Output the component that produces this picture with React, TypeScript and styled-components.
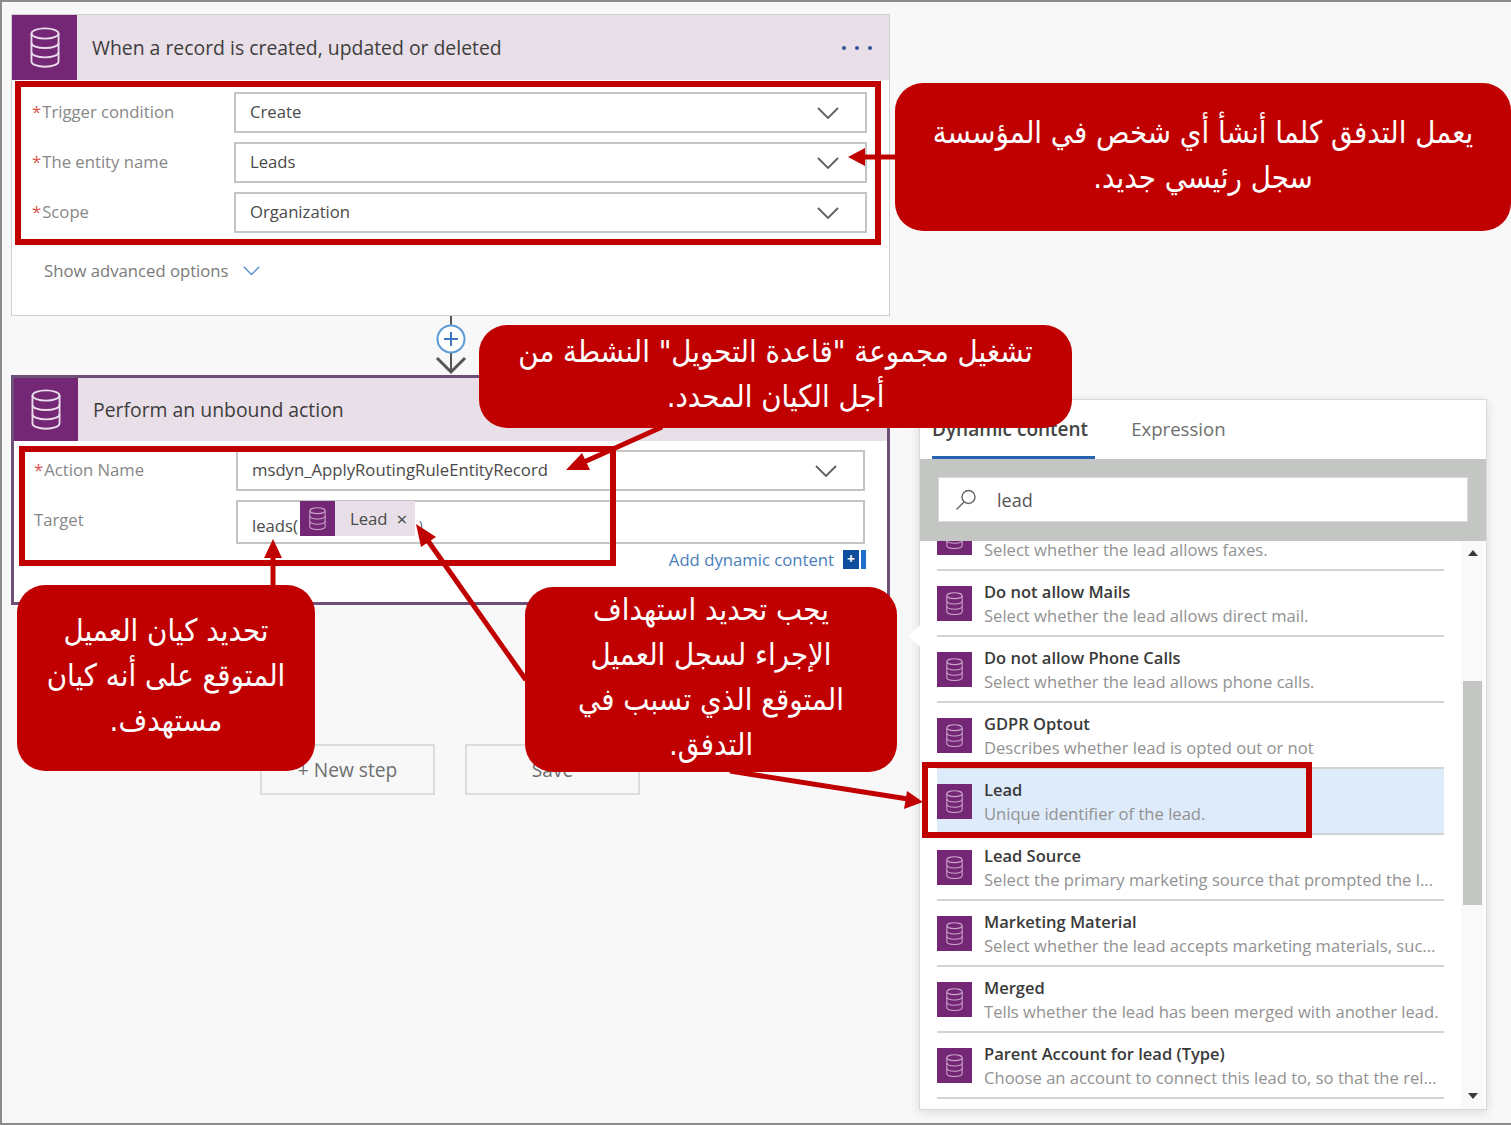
import styled, { createGlobalStyle } from 'styled-components'

const RED = '#c00000'
const PURPLE = '#742774'

const GlobalStyle = createGlobalStyle`
  html, body {
    margin: 0;
    padding: 0;
    background: #f7f8f7;
  }
  * {
    box-sizing: border-box;
  }
`

const Page = styled.div`
  position: relative;
  display: flex;
  align-items: flex-start;
  width: 1511px;
  height: 1125px;
  overflow: hidden;
  padding: 12px 0 0 9px;
  background: #f7f8f7;
  border: solid #8b8b8b;
  border-width: 2px 0 2px 2px;
  font-family: 'Open Sans', 'Noto Sans', sans-serif;
`

const LeftColumn = styled.div`
  display: flex;
  flex-direction: column;
  width: 879px;
  flex-shrink: 0;
`

const Card = styled.div<{ $strong?: boolean }>`
  background: #fff;
  border: ${({ $strong }) => ($strong ? '3px solid #6d5078' : '1px solid #cfcfcf')};
  height: ${({ $strong }) => ($strong ? '230px' : '302px')};
`

const CardHeader = styled.div<{ $height: number }>`
  display: flex;
  align-items: center;
  height: ${({ $height }) => $height}px;
  background: #e8dfe8;
`

const HeaderIcon = styled.div<{ $width: number }>`
  display: flex;
  align-items: center;
  justify-content: center;
  width: ${({ $width }) => $width}px;
  height: 100%;
  background: ${PURPLE};
  flex-shrink: 0;
`

const CardTitle = styled.div`
  flex: 1;
  margin-left: 15px;
  font-size: 19.4px;
  color: #3f3d3c;
`

const Dots = styled.div`
  display: flex;
  gap: 9px;
  margin-right: 17px;
  span {
    width: 4px;
    height: 4px;
    border-radius: 50%;
    background: #2b5797;
  }
`

const Form = styled.div<{ $top: number }>`
  display: flex;
  flex-direction: column;
  gap: 9px;
  padding: ${({ $top }) => $top}px 22px 0 20px;
`

const FormRow = styled.div`
  display: grid;
  grid-template-columns: 202px 1fr;
  align-items: start;
`

const Label = styled.div`
  font-size: 16.7px;
  line-height: 40px;
  color: #878787;
  white-space: nowrap;
  em {
    font-style: normal;
    color: #d9534f;
    margin-right: 1px;
  }
`

const Select = styled.div<{ $height?: number }>`
  position: relative;
  display: flex;
  align-items: center;
  height: ${({ $height }) => $height ?? 41}px;
  padding: 0 14px 2px;
  background: #fff;
  border: 2px solid #c4c4c4;
  font-size: 16.7px;
  color: #4a4a4a;
  white-space: nowrap;
  > svg {
    position: absolute;
    right: 26px;
    top: 50%;
    transform: translateY(-50%);
  }
`

const AdvancedRow = styled.div`
  display: flex;
  align-items: center;
  gap: 14px;
  margin: 26px 0 0 32px;
  font-size: 16.7px;
  color: #7a7a7a;
`

const Connector = styled.div`
  display: flex;
  justify-content: center;
  height: 60px;
  margin-left: 1px;
  margin-bottom: -1px;
`

const TargetValue = styled.div`
  display: flex;
  align-items: flex-start;
  height: 100%;
`

const TargetText = styled.span`
  align-self: center;
  margin: 8px 2px 0 0;
`

const TargetClose = styled(TargetText)`
  margin-left: 4px;
  font-size: 12px;
`

const Chip = styled.div`
  display: flex;
  align-items: center;
  width: 115px;
  height: 35px;
  margin-top: -1px;
  background: #e8dfe8;
  font-size: 16.7px;
  color: #4a4a4a;
`

const ChipIcon = styled.div`
  display: flex;
  align-items: center;
  justify-content: center;
  width: 35px;
  height: 100%;
  background: ${PURPLE};
  margin-right: 15px;
`

const ChipClose = styled.span`
  margin-left: 9px;
  font-size: 19px;
`

const AddDynamic = styled.div`
  display: flex;
  align-items: center;
  justify-content: flex-end;
  gap: 9px;
  margin: 4px 21px 0 0;
  font-size: 16.7px;
  color: #4a7ebb;
`

const PlusBox = styled.div`
  display: flex;
  justify-content: center;
  width: 23px;
  height: 19px;
  padding-right: 7px;
  font-size: 14px;
  font-weight: 700;
  line-height: 18px;
  color: #fff;
  background: linear-gradient(to right, #0f4c9c 16px, #fff 16px, #fff 18px, #1f6fd0 18px);
`

const ButtonRow = styled.div`
  display: flex;
  gap: 30px;
  margin: 139px 0 0 249px;
`

const FlowButton = styled.div`
  display: flex;
  align-items: center;
  justify-content: center;
  width: 175px;
  height: 51px;
  border: 2px solid #dcdedc;
  font-size: 19.2px;
  color: #6f6f6f;
`

const Panel = styled.div`
  position: relative;
  display: flex;
  flex-direction: column;
  width: 568px;
  height: 711px;
  margin: 385px 0 0 29px;
  background: #fff;
  border: 1px solid #d8d8d8;
  box-shadow: 0 2px 10px rgba(0, 0, 0, 0.12);
  flex-shrink: 0;
  &::before {
    content: '';
    position: absolute;
    left: -11px;
    top: 225px;
    border: solid transparent;
    border-width: 11px 11px 11px 0;
    border-right-color: #fff;
  }
`

const Tabs = styled.div`
  display: flex;
  gap: 36px;
  height: 59px;
  padding-left: 12px;
`

const Tab = styled.div<{ $active?: boolean }>`
  padding: 16px 7px 0 0;
  height: 59px;
  font-size: ${({ $active }) => ($active ? 19 : 18.6)}px;
  font-weight: ${({ $active }) => ($active ? 600 : 400)};
  color: ${({ $active }) => ($active ? '#444' : '#6f6f6f')};
  border-bottom: 3px solid ${({ $active }) => ($active ? '#2b62b0' : 'transparent')};
`

const SearchBand = styled.div`
  padding: 18px;
  height: 82px;
  background: #c4c6c4;
`

const SearchBox = styled.div`
  display: flex;
  align-items: center;
  gap: 20px;
  height: 45px;
  padding-left: 16px;
  background: #fff;
  border: 1px solid #d9d9d9;
  font-size: 18px;
  color: #555;
`

const ListArea = styled.div`
  display: flex;
  flex: 1;
  min-height: 0;
`

const List = styled.div`
  flex: 1;
  overflow: hidden;
  padding-left: 17px;
`

const ListInner = styled.div`
  margin-top: -36px;
  width: 507px;
`

const Item = styled.div<{ $selected?: boolean }>`
  display: flex;
  align-items: flex-start;
  gap: 12px;
  height: 66px;
  padding-top: 15px;
  background: ${({ $selected }) => ($selected ? '#deebfa' : 'transparent')};
  border-bottom: 2px solid #d2d4d2;
`

const ItemIcon = styled.div`
  display: flex;
  align-items: center;
  justify-content: center;
  width: 35px;
  height: 35px;
  background: ${PURPLE};
  flex-shrink: 0;
`

const ItemText = styled.div`
  margin-top: -6px;
  min-width: 0;
  white-space: nowrap;
`

const ItemTitle = styled.div`
  margin-bottom: 2px;
  font-size: 16.5px;
  font-weight: 600;
  line-height: 24px;
  color: #3a3a3a;
`

const ItemDesc = styled.div`
  font-size: 16.6px;
  line-height: 20px;
  color: #929292;
`

const Scrollbar = styled.div`
  display: flex;
  flex-direction: column;
  align-items: center;
  width: 23px;
  margin-right: 2px;
  padding-top: 9px;
  background: #f8f9f8;
`

const ScrollUp = styled.div`
  width: 0;
  height: 0;
  border: solid transparent;
  border-width: 0 5px 6px;
  border-bottom-color: #3a3a3a;
`

const ScrollThumb = styled.div`
  width: 19px;
  height: 224px;
  margin-top: 125px;
  background: #c4c6c4;
`

const ScrollDown = styled.div`
  width: 0;
  height: 0;
  margin-top: auto;
  margin-bottom: 10px;
  border: solid transparent;
  border-width: 6px 5px 0;
  border-top-color: #3a3a3a;
`

const Highlight = styled.div<{ $x: number; $y: number; $w: number; $h: number }>`
  position: absolute;
  left: ${({ $x }) => $x - 2}px;
  top: ${({ $y }) => $y - 2}px;
  width: ${({ $w }) => $w}px;
  height: ${({ $h }) => $h}px;
  border: 6px solid ${RED};
  pointer-events: none;
`

const Callout = styled.div<{ $x: number; $y: number; $w: number; $h: number }>`
  position: absolute;
  left: ${({ $x }) => $x - 2}px;
  top: ${({ $y }) => $y - 2}px;
  width: ${({ $w }) => $w}px;
  height: ${({ $h }) => $h}px;
  display: flex;
  flex-direction: column;
  justify-content: center;
  padding: 0 14px 5px;
  border-radius: 28px;
  background: ${RED};
  color: #fff;
  direction: rtl;
  text-align: center;
  font-family: 'DejaVu Sans Condensed', 'DejaVu Sans', sans-serif;
  font-stretch: condensed;
  font-size: 30.8px;
  line-height: 45px;
`

const ArrowLayer = styled.svg`
  position: absolute;
  left: -2px;
  top: -2px;
  pointer-events: none;
`

const DbIcon = ({ size, color }: { size: number; color: string }) => (
  <svg width={size} height={size * 1.37} viewBox="0 0 32 44" fill="none" stroke={color} strokeWidth="2">
    <ellipse cx="16" cy="7" rx="14.5" ry="5.5" />
    <path d="M1.5 7v30c0 3.200 6.500 5.500 14.500 5.500s14.500-2.300 14.500-5.500V7" />
    <path d="M1.500 17c0 3.200 6.500 5.500 14.500 5.500s14.500-2.300 14.500-5.500" />
    <path d="M1.500 27c0 3.200 6.500 5.500 14.500 5.500s14.500-2.300 14.500-5.500" />
  </svg>
)

const Chevron = ({ color = '#5f5f5f', width = 22 }: { color?: string; width?: number }) => (
  <svg width={width} height={width * 0.55} viewBox="0 0 22 12" fill="none" stroke={color} strokeWidth="1.8">
    <path d="M1 1l10 10L21 1" />
  </svg>
)

const items = [
  { title: '', desc: 'Select whether the lead allows faxes.' },
  { title: 'Do not allow Mails', desc: 'Select whether the lead allows direct mail.' },
  { title: 'Do not allow Phone Calls', desc: 'Select whether the lead allows phone calls.' },
  { title: 'GDPR Optout', desc: 'Describes whether lead is opted out or not' },
  { title: 'Lead', desc: 'Unique identifier of the lead.', selected: true },
  { title: 'Lead Source', desc: 'Select the primary marketing source that prompted the l...' },
  { title: 'Marketing Material', desc: 'Select whether the lead accepts marketing materials, suc...' },
  { title: 'Merged', desc: 'Tells whether the lead has been merged with another lead.' },
  { title: 'Parent Account for lead (Type)', desc: 'Choose an account to connect this lead to, so that the rel...' },
]

const triggerRows = [
  { label: 'Trigger condition', value: 'Create' },
  { label: 'The entity name', value: 'Leads' },
  { label: 'Scope', value: 'Organization' },
]

export default function App() {
  return (
    <Page>
      <GlobalStyle />
      <LeftColumn>
        <Card>
          <CardHeader $height={65}>
            <HeaderIcon $width={65}>
              <DbIcon size={30} color="#eadcea" />
            </HeaderIcon>
            <CardTitle>When a record is created, updated or deleted</CardTitle>
            <Dots>
              <span />
              <span />
              <span />
            </Dots>
          </CardHeader>
          <Form $top={12}>
            {triggerRows.map((row) => (
              <FormRow key={row.label}>
                <Label>
                  <em>*</em>
                  {row.label}
                </Label>
                <Select>
                  {row.value}
                  <Chevron />
                </Select>
              </FormRow>
            ))}
          </Form>
          <AdvancedRow>
            Show advanced options
            <Chevron color="#5b8fd0" width={17} />
          </AdvancedRow>
        </Card>

        <Connector>
          <svg width="32" height="60" viewBox="0 0 32 60" fill="none">
            <path d="M16 0v10M16 36v20" stroke="#555" strokeWidth="2" />
            <circle cx="16" cy="23" r="13.500" fill="#fff" stroke="#5b9bd5" strokeWidth="2" />
            <path d="M16 16v14M9 23h14" stroke="#3a78c2" strokeWidth="2" />
            <path d="M2 42l14 14 14-14" stroke="#555" strokeWidth="3" />
          </svg>
        </Connector>

        <Card $strong>
          <CardHeader $height={63}>
            <HeaderIcon $width={64}>
              <DbIcon size={30} color="#eadcea" />
            </HeaderIcon>
            <CardTitle>Perform an unbound action</CardTitle>
          </CardHeader>
          <Form $top={9}>
            <FormRow>
              <Label>
                <em>*</em>
                Action Name
              </Label>
              <Select>
                msdyn_ApplyRoutingRuleEntityRecord
                <Chevron />
              </Select>
            </FormRow>
            <FormRow>
              <Label>Target</Label>
              <Select $height={44}>
                <TargetValue>
                  <TargetText>leads(</TargetText>
                  <Chip>
                    <ChipIcon>
                      <DbIcon size={17} color="#c9a2c9" />
                    </ChipIcon>
                    Lead
                    <ChipClose>×</ChipClose>
                  </Chip>
                  <TargetClose>)</TargetClose>
                </TargetValue>
              </Select>
            </FormRow>
          </Form>
          <AddDynamic>
            Add dynamic content
            <PlusBox>+</PlusBox>
          </AddDynamic>
        </Card>

        <ButtonRow>
          <FlowButton>+ New step</FlowButton>
          <FlowButton>Save</FlowButton>
        </ButtonRow>
      </LeftColumn>

      <Panel>
        <Tabs>
          <Tab $active>Dynamic content</Tab>
          <Tab>Expression</Tab>
        </Tabs>
        <SearchBand>
          <SearchBox>
            <svg width="22" height="22" viewBox="0 0 22 22" fill="none" stroke="#666" strokeWidth="1.400">
              <circle cx="13.500" cy="8" r="6.500" />
              <path d="M9 13L1.500 20.500" />
            </svg>
            lead
          </SearchBox>
        </SearchBand>
        <ListArea>
          <List>
            <ListInner>
              {items.map((item) => (
                <Item key={item.desc} $selected={item.selected}>
                  <ItemIcon>
                    <DbIcon size={17} color="#c9a2c9" />
                  </ItemIcon>
                  <ItemText>
                    <ItemTitle>{item.title || '\u00a0'}</ItemTitle>
                    <ItemDesc>{item.desc}</ItemDesc>
                  </ItemText>
                </Item>
              ))}
            </ListInner>
          </List>
          <Scrollbar>
            <ScrollUp />
            <ScrollThumb />
            <ScrollDown />
          </Scrollbar>
        </ListArea>
      </Panel>

      <Highlight $x={15} $y={81} $w={866} $h={164} />
      <Highlight $x={19} $y={446} $w={597} $h={120} />
      <Highlight $x={922} $y={762} $w={390} $h={76} />

      <ArrowLayer width={1511} height={1125} viewBox="0 0 1511 1125" fill="none">
        <path d="M896 157H860" stroke={RED} strokeWidth="5" />
        <path d="M848 157l17-9v18z" fill={RED} />
        <path d="M662 427L584 462" stroke={RED} strokeWidth="5" />
        <path d="M566 470l16-17 8 17z" fill={RED} />
        <path d="M273 586V556" stroke={RED} strokeWidth="5" />
        <path d="M273 539l9 19h-18z" fill={RED} />
        <path d="M526 680L426 538" stroke={RED} strokeWidth="5" />
        <path d="M416 524l20 13-15 10z" fill={RED} />
        <path d="M730 771L908 799" stroke={RED} strokeWidth="5" />
        <path d="M923 802l-19 7 3-18z" fill={RED} />
      </ArrowLayer>

      <Callout $x={895} $y={83} $w={616} $h={148}>
        <div>يعمل التدفق كلما أنشأ أي شخص في المؤسسة</div>
        <div>سجل رئيسي جديد.</div>
      </Callout>
      <Callout $x={479} $y={325} $w={593} $h={103}>
        <div>تشغيل مجموعة "قاعدة التحويل" النشطة من</div>
        <div>أجل الكيان المحدد.</div>
      </Callout>
      <Callout $x={17} $y={585} $w={298} $h={186}>
        <div>تحديد كيان العميل</div>
        <div>المتوقع على أنه كيان</div>
        <div>مستهدف.</div>
      </Callout>
      <Callout $x={525} $y={587} $w={372} $h={185}>
        <div>يجب تحديد استهداف</div>
        <div>الإجراء لسجل العميل</div>
        <div>المتوقع الذي تسبب في</div>
        <div>التدفق.</div>
      </Callout>
    </Page>
  )
}
